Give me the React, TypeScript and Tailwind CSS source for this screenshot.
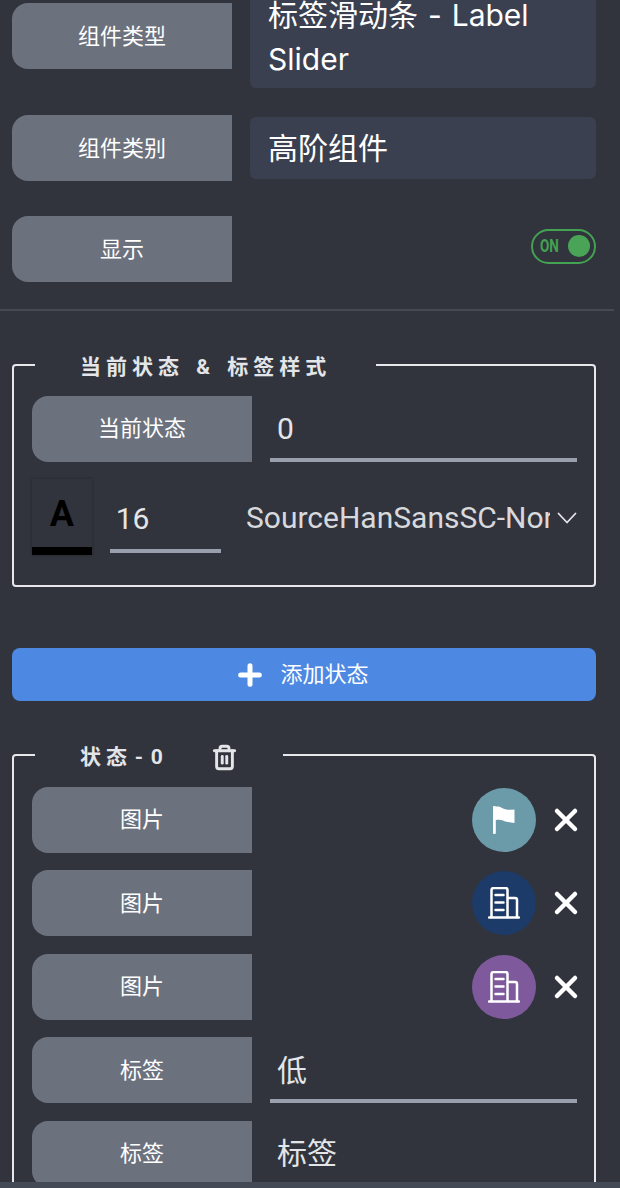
import { Plus, Trash2, X } from 'lucide-react';
import type { ReactNode } from 'react';

const cjk = "font-['Roboto','Noto_Sans_CJK_SC',sans-serif]";

function Label({ children, className = '' }: { children: ReactNode; className?: string }) {
  return (
    <div className={`flex h-[66px] w-[220px] shrink-0 items-center justify-center rounded-l-2xl bg-[#6c717e] text-[22px] text-white ${className}`}>
      {children}
    </div>
  );
}

function UnderlineValue({ children, line = true }: { children: ReactNode; line?: boolean }) {
  return (
    <div className={`ml-[18px] flex h-[66px] w-[307px] items-center border-b-4 pl-[7px] pt-1 text-[30px] text-[#e4e5e8] ${line ? 'border-[#9a9fae]' : 'border-transparent'}`}>
      {children}
    </div>
  );
}

function FlagIcon() {
  return (
    <svg width="22" height="28" viewBox="0 0 22 28" fill="white">
      <rect x="0" y="0" width="2.8" height="28" rx="1" />
      <path d="M0 1C4 0 7 0 10 2.5C13 4 17 4 21.5 3.5V17C17 16.5 13 16 10 14.5C7 13.5 4 13.5 0 15Z" />
    </svg>
  );
}

function BuildingIcon() {
  return (
    <svg width="32" height="32" viewBox="0 0 32 32" fill="none" stroke="white" strokeWidth="2.5" strokeLinecap="round" strokeLinejoin="round">
      <path d="M3.5 30V3a2 2 0 0 1 2-2h12a2 2 0 0 1 2 2v27" />
      <path d="M20 11h7a2 2 0 0 1 2 2v17" />
      <path d="M1 30.5h30" />
      <path d="M7.5 8h8M7.5 15.5h8M7.5 23h8" />
    </svg>
  );
}

function ImageRow({ color, children }: { color: string; children: ReactNode }) {
  return (
    <div className="flex items-center">
      <Label>图片</Label>
      <div className="-mr-[7px] ml-auto flex items-center gap-3">
        <div className={`flex h-16 w-16 items-center justify-center rounded-full ${color}`}>{children}</div>
        <X size={36} color="white" strokeWidth={3} />
      </div>
    </div>
  );
}

export default function App() {
  return (
    <div className={`relative h-[1188px] w-[620px] overflow-hidden bg-[#31343c] ${cjk}`}>
      <div className="-mt-[18px] flex items-start pl-3 pr-6">
        <Label className="mt-[21px]">组件类型</Label>
        <div className="ml-[18px] w-[346px] rounded-md bg-[#3a4050] px-[18px] pb-[7px] pt-[11px] font-['Inter','Noto_Sans_CJK_SC',sans-serif] text-[30px] leading-[44px] text-white [word-spacing:1.5px]">
          标签滑动条 - Label Slider
        </div>
      </div>

      <div className="mt-[27px] flex items-center pl-3 pr-6">
        <Label>组件类别</Label>
        <div className="ml-[18px] w-[346px] rounded-md bg-[#3a4050] px-[18px] pb-[8px] pt-[10px] text-[30px] leading-[44px] text-white">
          高阶组件
        </div>
      </div>

      <div className="mt-[35px] flex items-center justify-between pl-3 pr-6">
        <Label>显示</Label>
        <div className="mb-[6px] flex h-[35px] w-[65px] items-center justify-between rounded-full border-2 border-[#43a352] pl-[7px] pr-[4px]">
          <span className="origin-left scale-x-75 text-[18px] font-bold leading-none text-[#43a352]">ON</span>
          <span className="h-[22px] w-[22px] rounded-full bg-[#4aa457]" />
        </div>
      </div>

      <div className="mt-[27px] h-[2px] w-[614px] bg-[#474a54]" />

      <fieldset className="ml-3 mt-[35px] h-[241px] w-[584px] min-w-0 rounded border-2 border-[#e8e8ec] pl-[18px] pr-[17px] pt-[12px]">
        <legend className="ml-[3px] px-[45px] pt-[6px] text-[21px] font-bold tracking-[5px] text-[#e4e5e8] [word-spacing:2px]">当前状态 &amp; 标签样式</legend>
        <div className="flex items-center">
          <Label>当前状态</Label>
          <UnderlineValue>0</UnderlineValue>
        </div>
        <div className="mt-[17px] flex items-start">
          <div className="flex h-[76px] w-[60px] flex-col items-center justify-between shadow-[0_0_3px_rgba(0,0,0,0.3)]">
            <span className="mt-[15px] text-[36px] font-bold leading-[40px] text-black">A</span>
            <span className="h-2 w-full bg-black" />
          </div>
          <div className="ml-[18px] mt-[2px] flex h-[72px] w-[112px] items-center border-b-4 border-[#9a9fae] pl-[6px] pt-2 text-[30px] text-[#e4e5e8]">
            16
          </div>
          <div className="ml-[25px] mt-[19px] flex items-center">
            <span className="w-[304px] overflow-hidden whitespace-nowrap text-[30px] leading-[40px] text-[#d8d9dd]">SourceHanSansSC-Normal</span>
            <svg width="20" height="12" viewBox="0 0 20 12" fill="none" stroke="#e4e5e8" strokeWidth="1.8" strokeLinecap="round" strokeLinejoin="round" className="ml-[7px]">
              <path d="M1.5 1.5 10 10.5l8.5-9" />
            </svg>
          </div>
        </div>
      </fieldset>

      <div className="ml-3 mr-6 mt-[61px] flex h-[53px] items-center justify-center gap-[14px] rounded-lg bg-[#4d88e2] pr-[5px] text-[22px] text-white">
        <Plus size={32} strokeWidth={3.75} />
        添加状态
      </div>

      <fieldset className="ml-3 mt-[35px] w-[584px] min-w-0 rounded border-2 border-[#e8e8ec] pl-[18px] pr-[17px] pt-[13px]">
        <legend className="ml-[3px] flex items-center px-[45px] pt-[6px] text-[21px] font-bold tracking-[5px] text-[#e4e5e8] [word-spacing:-7.5px]">
          状态 - 0
          <Trash2 size={27} strokeWidth={2.6} className="ml-[43px]" />
        </legend>
        <div className="flex flex-col gap-[17.6px]">
          <ImageRow color="bg-[#6b9aa8]">
            <FlagIcon />
          </ImageRow>
          <ImageRow color="bg-[#1d3b69]">
            <BuildingIcon />
          </ImageRow>
          <ImageRow color="bg-[#7e5a9c]">
            <BuildingIcon />
          </ImageRow>
          <div className="flex items-center">
            <Label>标签</Label>
            <UnderlineValue>低</UnderlineValue>
          </div>
          <div className="flex items-center">
            <Label>标签</Label>
            <UnderlineValue line={false}>标签</UnderlineValue>
          </div>
        </div>
      </fieldset>

      <div className="absolute bottom-0 left-0 h-[6px] w-full bg-[#434955]" />
    </div>
  );
}
